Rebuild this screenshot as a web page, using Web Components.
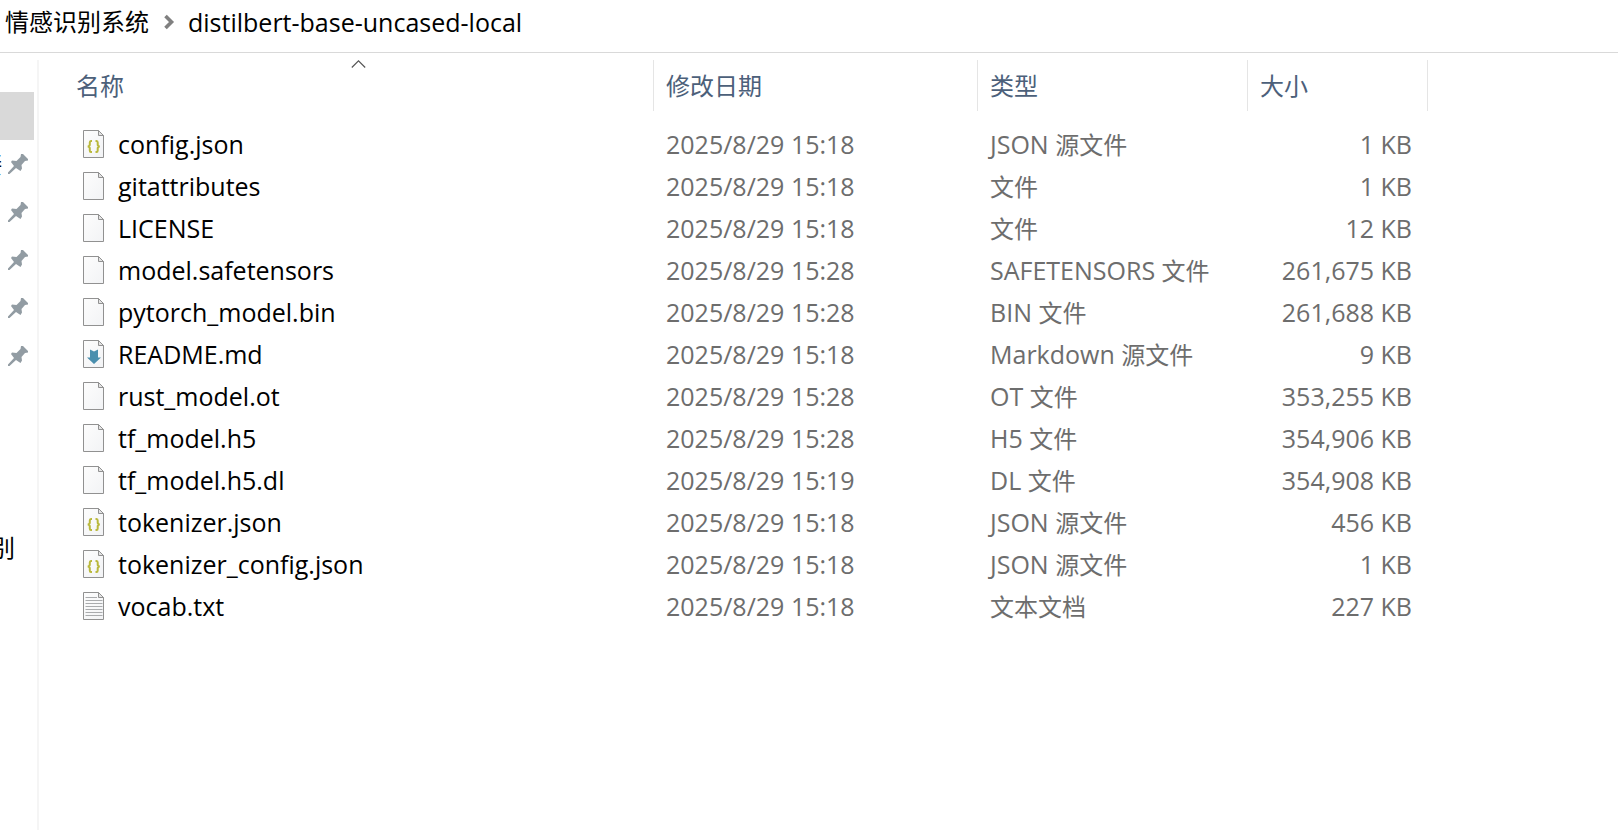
<!DOCTYPE html>
<html lang="zh-CN">
<head>
<meta charset="utf-8">
<title>distilbert-base-uncased-local</title>
<style>
  body {
    margin: 0;
    background: #fff;
    color: #000;
    font: 24px/32px "Open Sans", "Noto Sans CJK SC", sans-serif;
  }
</style>
</head>
<body>
<file-explorer>
  <path-bar slot="path">
    <path-crumb>情感识别系统</path-crumb>
    <path-crumb latin>distilbert-base-uncased-local</path-crumb>
  </path-bar>
  <quick-access slot="nav"></quick-access>
  <file-list></file-list>
</file-explorer>

<script>
"use strict";

// file-explorer: path on top, navigation left, content right
class FileExplorer extends HTMLElement {
  constructor() {
    super();
    this.attachShadow({ mode: "open" }).innerHTML = /*html*/ `
      <style>
        :host {
          display: flex;
          flex-direction: column;
          height: 100vh;
        }

        header {
          border-bottom: 1px solid #d9d9d9;
        }

        #body {
          display: flex;
          flex: 1;
          min-height: 0;
          padding-top: 7px;
        }

        main {
          flex: 1;
          min-width: 0;
        }
      </style>
      <header><slot name="path"></slot></header>
      <div id="body">
        <slot name="nav"></slot>
        <main><slot></slot></main>
      </div>
    `;
  }
}

// path-bar
class PathBar extends HTMLElement {
  constructor() {
    super();
    this.attachShadow({ mode: "open" }).innerHTML = /*html*/ `
      <style>
        :host {
          display: flex;
          align-items: center;
          height: 44px;
          padding: 0 5px 8px;
        }
      </style>
      <slot></slot>
    `;
  }
}

// path-crumb: every crumb but the first has a chevron before it
class PathCrumb extends HTMLElement {
  constructor() {
    super();
    this.attachShadow({ mode: "open" }).innerHTML = /*html*/ `
      <style>
        :host {
          display: flex;
          align-items: center;
        }

        :host([latin]) {
          font-size: 25px;
        }

        a {
          color: inherit;
          text-decoration: none;
          white-space: nowrap;
        }

        svg {
          display: block;
          margin: 0 13px 0 14px;
        }

        :host(:first-of-type) svg {
          display: none;
        }
      </style>
      <svg width="12" height="16" viewBox="0 0 12 16" aria-hidden="true">
        <path d="M2.5 2 8.500 8l-6 6" fill="none" stroke="#808080" stroke-width="3.600"/>
      </svg>
      <a href="#"><slot></slot></a>
    `;
  }
}

// quick-access: navigation pane, scrolled so that only its right edge shows
class QuickAccess extends HTMLElement {
  constructor() {
    super();
    const pin = /*html*/ `
      <svg width="20" height="20" viewBox="0 0 20 20" aria-hidden="true">
        <path fill="#929ca3" d="M13 0h2l5 5v1.500l-3 .5-3.500 4 .5 3.500-1.500 2.500L8 14 1.500 20H0v-1.500L6 12 3 8l1-1.500 4.500.500L12.500 3z"/>
      </svg>`;
    const labels = ["链接", "", "", "", ""];
    this.attachShadow({ mode: "open" }).innerHTML = /*html*/ `
      <style>
        :host {
          display: block;
          flex: none;
          width: 37px;
          overflow: hidden;
          border-right: 2px solid #f5f5f5;
        }

        ul {
          margin: 0;
          padding: 32px 3px 0 0;
          list-style: none;
        }

        li {
          display: flex;
          align-items: center;
          justify-content: flex-end;
          gap: 6px;
          height: 48px;
          white-space: nowrap;
        }

        svg {
          flex: none;
        }

        .selected {
          background: #d9d9d9;
        }

        .pinned {
          padding-right: 6px;
        }

        .folder {
          margin-top: 144px;
          padding-right: 19px;
        }
      </style>
      <ul>
        <li class="selected"></li>
        ${labels.map((label) => `<li class="pinned"><span>${label}</span>${pin}</li>`).join("")}
        <li class="folder">别</li>
      </ul>
    `;
  }
}

// file-icon: sheet of paper with a mark for its kind
class FileIcon extends HTMLElement {
  static get observedAttributes() {
    return ["kind"];
  }

  constructor() {
    super();
    this.attachShadow({ mode: "open" });
  }

  attributeChangedCallback() {
    this._render();
  }

  connectedCallback() {
    this._render();
  }

  get _mark() {
    switch (this.getAttribute("kind")) {
      case "json":
        return `<path d="M9 11H8Q6.800 11 6.800 12.500v2Q6.800 16.200 4.800 16.500q2 .3 2 2V20.500q0 1.500 1.200 1.500H9M12.500 11h1q1.200 0 1.200 1.500v2q0 1.700 2 2-2 .3-2 2V20.500q0 1.500-1.200 1.500H12.500" fill="none" stroke="#b9b83c" stroke-width="2"/>`;
      case "md":
        return `<path d="M7 9.500 11 11.500 15 9.500V17.500H18L11 24 4 17.500H7z" fill="#4a8fae"/>`;
      case "txt":
        return `<path d="M2.500 5.500H14M2.500 8.500h17M2.500 11.500h17M2.500 14.500h17M2.500 17.500h17M2.500 20.500h17M2.500 23.500h17" stroke="#a9abad"/>`;
      default:
        return "";
    }
  }

  _render() {
    this.shadowRoot.innerHTML = /*html*/ `
      <style>
        :host {
          display: block;
          flex: none;
        }

        svg {
          display: block;
        }
      </style>
      <svg width="22" height="28" viewBox="0 0 22 28" aria-hidden="true">
        <defs>
          <linearGradient id="paper" x2="1" y2="1">
            <stop stop-color="#fdfdfd"/>
            <stop offset="1" stop-color="#f2f3f5"/>
          </linearGradient>
        </defs>
        <path d="M.5.5h15l5 5v22H.5z" fill="url(#paper)" stroke="#919191"/>
        <path d="M15.500.5v5h5z" fill="#e4e4e4" stroke="#919191"/>
        ${this._mark}
      </svg>
    `;
  }
}

// file-list: details view
class FileList extends HTMLElement {
  constructor() {
    super();

    this._files = [
      ["config.json", "json", "2025/8/29 15:18", "JSON 源文件", "1 KB"],
      ["gitattributes", "", "2025/8/29 15:18", "文件", "1 KB"],
      ["LICENSE", "", "2025/8/29 15:18", "文件", "12 KB"],
      ["model.safetensors", "", "2025/8/29 15:28", "SAFETENSORS 文件", "261,675 KB"],
      ["pytorch_model.bin", "", "2025/8/29 15:28", "BIN 文件", "261,688 KB"],
      ["README.md", "md", "2025/8/29 15:18", "Markdown 源文件", "9 KB"],
      ["rust_model.ot", "", "2025/8/29 15:28", "OT 文件", "353,255 KB"],
      ["tf_model.h5", "", "2025/8/29 15:28", "H5 文件", "354,906 KB"],
      ["tf_model.h5.dl", "", "2025/8/29 15:19", "DL 文件", "354,908 KB"],
      ["tokenizer.json", "json", "2025/8/29 15:18", "JSON 源文件", "456 KB"],
      ["tokenizer_config.json", "json", "2025/8/29 15:18", "JSON 源文件", "1 KB"],
      ["vocab.txt", "txt", "2025/8/29 15:18", "文本文档", "227 KB"],
    ];

    this.attachShadow({ mode: "open" }).innerHTML = this._template;
  }

  get _style() {
    return /*css*/ `
        table {
            table-layout: fixed;
            width: calc(100% - 190px);
            border-collapse: separate;
            border-spacing: 0;
        }

        .date { width: 324px; }
        .type { width: 270px; }
        .size { width: 180px; }

        th {
            position: relative;
            box-sizing: border-box;
            height: 51px;
            padding: 0 12px;
            border-right: 1px solid #e5e5e5;
            color: #4c607a;
            font-weight: 400;
            text-align: left;
        }

        th:first-child {
            padding-left: 37px;
        }

        th button {
            display: block;
            padding: 0;
            border: 0;
            background: none;
            color: inherit;
            font: inherit;
        }

        #sort {
            position: absolute;
            top: 0;
            left: 37px;
            right: 12px;
            margin: 0 auto;
        }

        tbody::before {
            content: "";
            display: block;
            height: 12px;
        }

        td {
            height: 42px;
            padding: 0 12px;
            color: #6d6d6d;
            font-size: 25px;
            white-space: nowrap;
        }

        td:first-child {
            padding-left: 44px;
            color: #000;
        }

        td:last-child {
            padding-right: 16px;
            text-align: right;
        }

        .cjk {
            font-size: 24px;
        }

        .file {
            display: flex;
            align-items: center;
            gap: 13px;
        }
    `;
  }

  get _template() {
    const rows = this._files.map(
      ([name, kind, date, type, size]) => /*html*/ `
        <tr>
          <td><div class="file"><file-icon kind="${kind}"></file-icon><span>${name}</span></div></td>
          <td>${date}</td>
          <td>${type.replace(/[\u4e00-\u9fff]+/, '<span class="cjk">$&</span>')}</td>
          <td>${size}</td>
        </tr>`
    );
    return /*html*/ `
        <style>
            :host {
                display: block;
            }
            ${this._style}
        </style>
        <table>
          <colgroup>
            <col class="name"><col class="date"><col class="type"><col class="size">
          </colgroup>
          <thead>
            <tr>
              <th aria-sort="ascending">
                <button type="button">名称</button>
                <svg id="sort" width="15" height="8" viewBox="0 0 15 8" aria-hidden="true">
                  <path d="M.8 7.500 7.500.9l6.700 6.600" fill="none" stroke="#555" stroke-width="1.200"/>
                </svg>
              </th>
              <th><button type="button">修改日期</button></th>
              <th><button type="button">类型</button></th>
              <th><button type="button">大小</button></th>
            </tr>
          </thead>
          <tbody>${rows.join("")}</tbody>
        </table>
    `;
  }
}

customElements.define("file-icon", FileIcon);
customElements.define("file-list", FileList);
customElements.define("quick-access", QuickAccess);
customElements.define("path-crumb", PathCrumb);
customElements.define("path-bar", PathBar);
customElements.define("file-explorer", FileExplorer);
</script>
</body>
</html>
